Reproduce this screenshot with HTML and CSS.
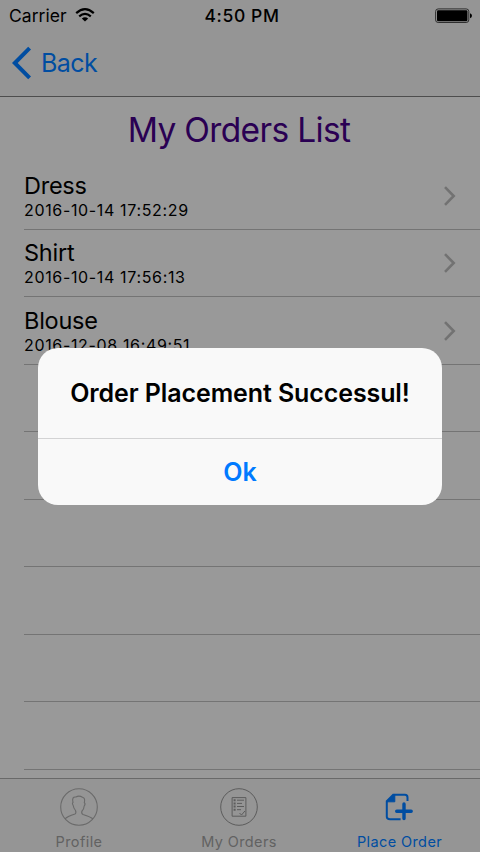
FILE: index.html
```html
<!DOCTYPE html>
<html lang="en">
<head>
<meta charset="utf-8">
<title>My Orders</title>
<link rel="stylesheet" href="styles.css">
</head>
<body>
<div class="screen">
  <header class="top">
    <div class="status">
      <div class="carrier"><span class="carrier-name">Carrier</span>
        <svg class="wifi" width="20" height="14" viewBox="0 0 20 14" fill="none" stroke="#000" stroke-width="2.2"><path d="M1.2 5.1Q10-2.7 18.8 5.1M4.2 8.3Q10 3.3 15.8 8.3"/><path d="M6.8 10.5Q10 8 13.2 10.5L10 13.5Z" fill="#000" stroke="none"/></svg>
      </div>
      <time class="clock">4:50 PM</time>
      <svg class="battery" width="38" height="16" viewBox="0 0 38 16"><rect x=".6" y=".9" width="33.2" height="13.6" rx="2.6" fill="none" stroke="#222" stroke-width=".9"/><rect x="2" y="2.2" width="30.4" height="11" rx="1.2"/><path d="M35 5.2Q37 6 37 7.7T35 10.2Z"/></svg>
    </div>
    <nav class="navbar">
      <svg width="20" height="34" viewBox="0 0 20 34" fill="none" stroke="#004da1" stroke-width="4"><path d="M17.6 2.2 2.8 17l14.8 14.8"/></svg>
      <span class="back">Back</span>
    </nav>
  </header>
  <main class="content">
    <h1 class="title">My Orders List</h1>
    <ul class="list">
      <li class="row"><div><div class="name">Dress</div><div class="date">2016-10-14 17:52:29</div></div><svg class="chevron" width="14" height="20" viewBox="0 0 14 20"><path d="m2 1.2 8.7 8.8L2 18.8"/></svg></li>
      <li class="row"><div><div class="name">Shirt</div><div class="date">2016-10-14 17:56:13</div></div><svg class="chevron" width="14" height="20" viewBox="0 0 14 20"><path d="m2 1.2 8.7 8.8L2 18.8"/></svg></li>
      <li class="row"><div><div class="name">Blouse</div><div class="date">2016-12-08 16:49:51</div></div><svg class="chevron" width="14" height="20" viewBox="0 0 14 20"><path d="m2 1.2 8.7 8.8L2 18.8"/></svg></li>
      <li class="row"></li><li class="row"></li><li class="row"></li><li class="row"></li><li class="row"></li><li class="row"></li>
    </ul>
  </main>
  <footer class="tabs">
    <div class="tab">
      <svg width="40" height="40" viewBox="0 0 40 40" fill="none" stroke="#6a6a6a" stroke-width="1.1"><circle cx="20" cy="20" r="18.3"/><path d="M6 32Q8 29.5 16 27Q17.5 26 16.5 23.5Q14.5 21 14.2 18.5Q12.8 16 14 15.5Q12.5 9.5 17 10Q20 8 23.5 10.3Q26.5 11 25.3 15.7Q26.8 17 25.2 19Q25 22 23 24Q22 26.4 24 27.5Q32 30 34 32"/></svg>
      <span class="label">Profile</span>
    </div>
    <div class="tab">
      <svg width="40" height="40" viewBox="0 0 40 40" fill="none" stroke="#5c5c5c" stroke-width="1"><circle cx="20" cy="20" r="18.3"/><path d="M13.1 10.6h13.8v18.6H13.1zM18 13.2h7M18 16.4h5M18 19.5h7M18 22.7h4M20.5 26l2 2 3.4-4"/><path d="M14.6 13.2h2M14.6 16.4h2M14.6 19.5h2M14.6 22.7h2" stroke-width="2"/></svg>
      <span class="label">My Orders</span>
    </div>
    <div class="tab active">
      <svg width="40" height="40" viewBox="0 0 40 40" fill="none" stroke="#004da1"><path d="M20.6 32.2H10Q6.8 32.2 6.8 29.8V14.2L13.2 7.8H25Q27.5 7.8 27.5 10.5V14" stroke-width="2"/><path d="M6.8 14.8 14.8 7.2V14.8Z" fill="#004da1" stroke-width="1"/><path d="M16.7 24.2H31.2M24 17V31.6" stroke-width="3.4" stroke-linecap="round"/></svg>
      <span class="label">Place Order</span>
    </div>
  </footer>
  <section class="dialog" role="dialog">
    <h2 class="message">Order Placement Successul!</h2>
    <div class="ok">Ok</div>
  </section>
</div>
</body>
</html>
```
FILE: styles.css
```css
* { box-sizing: border-box; }
body { margin: 0; background: #999; color: #000; font-family: Inter, "Liberation Sans", sans-serif; }
.screen { position: relative; width: 480px; height: 852px; overflow: hidden; display: flex; flex-direction: column; background: #999; }
.top { flex: none; height: 97px; background: #959595; border-bottom: 1px solid #4d4d4d; }
.status { height: 30px; display: grid; grid-template-columns: 1fr auto 1fr; align-items: center; padding: 1px 7px 0 9px; }
.carrier { display: flex; align-items: center; gap: 8px; }
.carrier-name { font-size: 17.5px; letter-spacing: 0.05px; }
.wifi { margin-top: -2px; }
.clock { font-size: 17.5px; font-weight: 550; letter-spacing: 0.6px; padding-left: 2px; }
.battery { justify-self: end; }
.navbar { height: 66px; display: flex; align-items: center; padding-left: 12px; gap: 9px; color: #004da1; }
.back { font-size: 25px; letter-spacing: -0.6px; margin-top: -1px; }
.content { flex: none; height: 681px; overflow: hidden; }
.title { margin: 0; height: 65.4px; padding-right: 2px; line-height: 66px; text-align: center; color: #2a0053; font-size: 33.5px; font-weight: 400; letter-spacing: -0.65px; }
.list { list-style: none; margin: 0; padding: 0 0 0 24px; }
.row { height: 67.5px; display: flex; justify-content: space-between; padding: 7.5px 23px 0 0; border-bottom: 1px solid #747474; }
.name { height: 29px; line-height: 31px; font-size: 23.5px; letter-spacing: -0.25px; }
.date { height: 22px; line-height: 22px; font-size: 16px; letter-spacing: 0.65px; white-space: nowrap; }
.chevron { margin-top: 16px; fill: none; stroke: #727272; stroke-width: 2.6; }
.tabs { flex: none; height: 74px; display: grid; grid-template-columns: repeat(3, 1fr); background: #959595; border-top: 1px solid #696969; color: #626262; }
.tab { display: flex; flex-direction: column; align-items: center; padding: 8px 2px 0 0; }
.label { font-size: 14.5px; line-height: 29px; letter-spacing: 0.4px; white-space: nowrap; }
.active { color: #004da1; padding-right: 1px; }
.dialog { position: absolute; left: 38px; top: 348px; width: 404px; height: 157px; border-radius: 20px; background: #f9f9f9; overflow: hidden; text-align: center; }
.message { margin: 0; height: 91px; line-height: 90px; font-size: 25px; font-weight: 560; letter-spacing: -0.1px; white-space: nowrap; border-bottom: 1px solid #d3d3d4; }
.ok { line-height: 66px; font-size: 25px; font-weight: 560; color: #007aff; }
```
